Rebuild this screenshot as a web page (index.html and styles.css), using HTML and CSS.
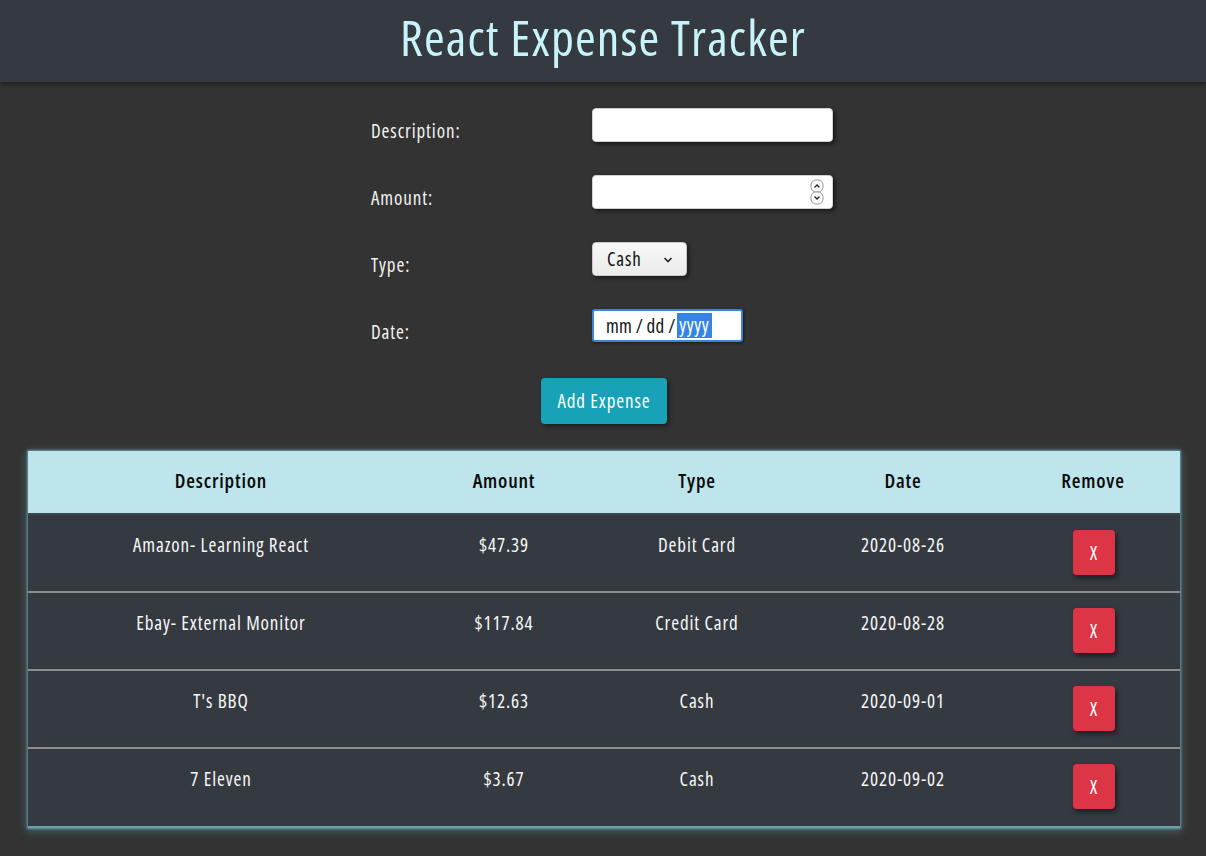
FILE: index.html
```html
<!DOCTYPE html>
<html lang="en">
<head>
<meta charset="utf-8">
<title>React Expense Tracker</title>
<link rel="stylesheet" href="styles.css">
</head>
<body>
<header class="topbar">
  <h1 class="title">React Expense Tracker</h1>
</header>
<main class="main">
  <form class="form">
    <label class="label">Description:</label>
    <div class="field"><div class="input"></div></div>

    <label class="label">Amount:</label>
    <div class="field">
      <div class="input number">
        <svg class="spin" width="14" height="30" viewBox="0 0 14 30">
          <rect x="1" y="3" width="12" height="12" rx="5" fill="#fff" stroke="#9a9a9a"/>
          <rect x="1" y="15" width="12" height="12" rx="5" fill="#fff" stroke="#9a9a9a"/>
          <path d="M4.5 10.5 L7 8 L9.5 10.5" fill="none" stroke="#222" stroke-width="1.3"/>
          <path d="M4.5 19.5 L7 22 L9.5 19.5" fill="none" stroke="#222" stroke-width="1.3"/>
        </svg>
      </div>
    </div>

    <label class="label">Type:</label>
    <div class="field">
      <div class="select">
        <span class="select-text">Cash</span>
        <svg class="chev" width="10" height="8" viewBox="0 0 10 8"><path d="M1.5 2 L5 5.5 L8.5 2" fill="none" stroke="#222" stroke-width="1.6"/></svg>
      </div>
    </div>

    <label class="label">Date:</label>
    <div class="field">
      <div class="date"><span>mm / dd /</span><span class="sel">yyyy</span></div>
    </div>

    <div class="actions"><button type="button" class="add">Add Expense</button></div>
  </form>

  <div class="table-wrap">
  <table class="table">
    <colgroup>
      <col class="c1"><col class="c2"><col class="c3"><col class="c4"><col class="c5">
    </colgroup>
    <thead>
      <tr><th>Description</th><th>Amount</th><th>Type</th><th>Date</th><th>Remove</th></tr>
    </thead>
    <tbody>
      <tr><td>Amazon- Learning React</td><td>$47.39</td><td>Debit Card</td><td>2020-08-26</td><td class="rm"><button type="button" class="x">X</button></td></tr>
      <tr><td>Ebay- External Monitor</td><td>$117.84</td><td>Credit Card</td><td>2020-08-28</td><td class="rm"><button type="button" class="x">X</button></td></tr>
      <tr><td>T's BBQ</td><td>$12.63</td><td>Cash</td><td>2020-09-01</td><td class="rm"><button type="button" class="x">X</button></td></tr>
      <tr><td>7 Eleven</td><td>$3.67</td><td>Cash</td><td>2020-09-02</td><td class="rm"><button type="button" class="x">X</button></td></tr>
    </tbody>
  </table>
  </div>
</main>
</body>
</html>
```
FILE: styles.css
```css
* { box-sizing: border-box; }
html, body { margin: 0; padding: 0; }
body {
  background: #333333;
  font-family: "Open Sans", "Noto Sans", sans-serif;
  font-stretch: 75%;
  letter-spacing: 0.9px;
  color: #f2f2f2;
  font-size: 19px;
  padding-bottom: 30px;
}
.topbar {
  height: 82px;
  background: #343a40;
  box-shadow: 0 2px 5px rgba(0,0,0,0.45);
  display: flex;
  align-items: center;
  justify-content: center;
}
.title {
  margin: 0;
  font-weight: 400;
  font-size: 50px;
  letter-spacing: 1.2px;
  color: #c9f3fa;
  line-height: 1;
  padding-bottom: 9px;
}
.main { padding: 26px 26px 0 28px; }
.form {
  width: 466px;
  margin: 0 auto;
  display: grid;
  grid-template-columns: 221px 245px;
  row-gap: 33px;
}
.label { padding-top: 12px; line-height: 22px; }
.field { height: 34px; }
.input {
  width: 241px; height: 34px;
  background: #fff;
  border: 1px solid #d0d0d0;
  border-radius: 4px;
  box-shadow: 2px 2px 4px rgba(0,0,0,0.55);
  position: relative;
}
.spin { position: absolute; right: 8px; top: 1px; }
.select {
  position: relative;
  width: 95px; height: 34px;
  background: linear-gradient(#f7f7f7, #ebebeb);
  border: 1px solid #c8c8c8;
  border-radius: 4px;
  box-shadow: 2px 2px 4px rgba(0,0,0,0.5);
  display: flex; align-items: center;
  padding-left: 14px;
  color: #111;
}
.chev { position: absolute; right: 13px; top: 13px; }
.date {
  width: 151px; height: 33px;
  background: #fff;
  border: 2px solid #3c83d9;
  border-radius: 3px;
  box-shadow: 1px 1px 3px rgba(0,0,0,0.5);
  color: #111;
  display: flex; align-items: center;
  padding-left: 12px;
  gap: 2px;
  letter-spacing: 0.2px;
  white-space: nowrap;
}
.sel { background: #3584e4; color: #fff; padding: 0 3px 0 2px; line-height: 25px; letter-spacing: 0.6px; }
.actions { grid-column: 1 / span 2; display: flex; justify-content: center; margin-top: 2px; }
.add {
  font: inherit;
  letter-spacing: inherit;
  color: #fff;
  background: #17a2b8;
  border: none;
  border-radius: 4px;
  width: 126px; height: 46px;
  box-shadow: 2px 2px 4px rgba(0,0,0,0.45);
  padding: 0;
}
.table-wrap {
  margin-top: 27px;
  background: #353a41;
  border-bottom: 2px solid #6a9fa9;
  box-shadow: 0 0 2px 1px rgba(110,165,175,0.85), 0 2px 8px 2px rgba(80,140,150,0.45);
}
.table {
  width: 100%;
  border-collapse: collapse;
  table-layout: fixed;
}
.c1 { width: 386px; } .c2 { width: 180px; } .c3 { width: 206px; } .c4 { width: 206px; } .c5 { width: 174px; }
thead tr { background: #bee5eb; }
th {
  height: 63px;
  color: #0a0a0a;
  font-weight: 600;
  font-size: 20px;
  letter-spacing: 0.8px;
  text-align: center;
  border-bottom: 2px solid #3b4650;
  padding: 0 0 4px 0;
}
td {
  text-align: center;
  vertical-align: top;
  padding: 19px 0 0 0;
  height: 78px;
  color: #f7f7f7;
  line-height: 22px;
}
tbody tr + tr td { border-top: 2px solid #8d8d8d; }
td.rm { padding-top: 15px; }
.x {
  font: inherit;
  width: 42px; height: 45px;
  background: #dc3545;
  color: #fff;
  border: none;
  border-radius: 4px;
  padding: 0;
  box-shadow: 2px 3px 5px rgba(0,0,0,0.5);
  margin-left: 1px;
}
```
